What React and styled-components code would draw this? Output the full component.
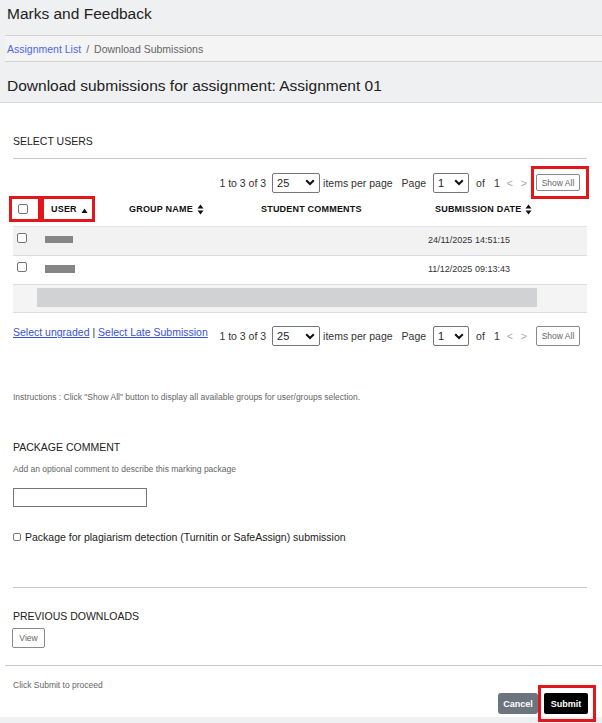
import React from "react";
import styled, { createGlobalStyle } from "styled-components";

const Global = createGlobalStyle`
  html, body { margin: 0; padding: 0; background: #eff0f1; }
  body { font-family: "Liberation Sans", Arial, sans-serif; color: #222; }
  * { box-sizing: border-box; }
`;

const Page = styled.div`
  width: 602px;
  height: 723px;
  overflow: hidden;
  background: #eff0f1;
`;

const TopBar = styled.header`
  height: 35px;
  padding: 5px 0 0 7px;
  line-height: 18px;
  font-size: 15.5px;
  color: #222;
`;

const Crumbs = styled.nav`
  margin-left: 5px;
  height: 27px;
  background: #f4f4f4;
  border-top: 1px solid #d2d2d2;
  border-bottom: 1px solid #d2d2d2;
  display: flex;
  align-items: center;
  padding-left: 2px;
  font-size: 10.5px;
  color: #666;
  gap: 5px;
`;

const CrumbLink = styled.a`
  color: #4a66f0;
  text-decoration: none;
`;

const TitleBar = styled.h1`
  margin: 0;
  height: 41px;
  padding: 15px 0 0 7px;
  line-height: 18px;
  font-size: 15.5px;
  font-weight: normal;
  color: #222;
  border-bottom: 1px solid #d8d8d8;
`;

const Panel = styled.main`
  background: #fff;
  height: 614px;
  display: flex;
  flex-direction: column;
`;

const Body = styled.section`
  padding: 0 15px 0 13px;
  display: flex;
  flex-direction: column;
`;

const Label = styled.div`
  margin-top: ${(p) => p.$mt}px;
  font-size: 10.5px;
  line-height: 12px;
  color: #222;
`;

const Hint = styled.div`
  margin-top: ${(p) => p.$mt}px;
  font-size: 8.5px;
  line-height: 10px;
  color: #666;
`;

const Divider = styled.hr`
  margin: ${(p) => p.$mt}px 0 0;
  border: 0;
  border-top: 1px solid #c8c8c8;
  height: 0;
`;

const PagerRow = styled.div`
  margin-top: ${(p) => p.$mt}px;
  display: flex;
  align-items: ${(p) => p.$align || "center"};
  justify-content: ${(p) => p.$justify || "flex-end"};
  margin-right: ${(p) => p.$mr}px;
`;

const Pager = styled.div`
  display: flex;
  align-items: center;
  font-size: 10.5px;
  color: #333;
  margin-left: 2px;
`;

const FakeSelect = styled.div`
  width: ${(p) => p.$w}px;
  height: 20px;
  border: 1px solid #767676;
  border-radius: 2px;
  background: #fff;
  display: flex;
  align-items: center;
  justify-content: space-between;
  padding: 0 4px 0 4px;
  font-size: 11px;
  color: #222;
  margin: 0 ${(p) => p.$mr}px 0 ${(p) => p.$ml}px;
`;

const Arrow = styled.span`
  color: #aaa;
  margin-left: ${(p) => p.$ml}px;
`;

const SmallButton = styled.button`
  font-family: inherit;
  font-size: 8.5px;
  color: #666;
  background: #fff;
  border: 1px solid #8a8a8a;
  border-radius: 2px;
  padding: 0;
  width: ${(p) => p.$w}px;
  height: ${(p) => p.$h}px;
  display: flex;
  align-items: center;
  justify-content: center;
  margin-left: ${(p) => p.$ml || 0}px;
`;

const RedBox = styled.div`
  border: 3px solid #e3161b;
  padding: ${(p) => p.$pad};
  display: flex;
  align-items: center;
  margin-left: ${(p) => p.$ml || 0}px;
`;

const HeaderGrid = styled.div`
  margin-top: -3px;
  margin-left: -4px;
  display: grid;
  grid-template-columns: 32px 88px 132px 167px 1fr;
  align-items: center;
  height: 30px;
  padding-bottom: 4px;
  font-size: 9px;
  font-weight: bold;
  letter-spacing: 0.2px;
  color: #111;
`;

const HeadCell = styled.div`
  display: flex;
  align-items: center;
  gap: 4px;
  padding-left: ${(p) => p.$pl || 0}px;
`;

const Table = styled.div`
  border-top: 1px solid #e2e2e8;
`;

const Row = styled.div`
  display: grid;
  grid-template-columns: 28px 88px 132px 167px 1fr;
  align-items: center;
  height: 29px;
  padding-bottom: 3px;
  border-bottom: 1px solid #dcdce2;
  background: ${(p) => (p.$shade ? "#f2f2f2" : "#fff")};
  font-size: 9px;
  color: #333;
`;

const FillRow = styled.div`
  height: 28px;
  border-bottom: 1px solid #dcdce2;
  background: #f4f4f4;
  padding: 3px 50px 5px 24px;
  display: flex;
`;

const FillBar = styled.div`
  flex: 1;
  background: #d1d2d3;
`;

const Check = styled.span`
  display: block;
  width: ${(p) => p.$s || 10}px;
  height: ${(p) => p.$s || 10}px;
  border: 1px solid #767676;
  border-radius: 2px;
  background: #fff;
  margin-left: ${(p) => p.$ml || 0}px;
  margin-top: ${(p) => p.$mt || 0}px;
`;

const NameBar = styled.span`
  display: block;
  width: ${(p) => p.$w}px;
  height: ${(p) => p.$h}px;
  background: #868686;
  margin-left: 4px;
`;

const Links = styled.div`
  font-size: 10.5px;
  color: #333;
`;

const Link = styled.a`
  color: #3552d4;
  text-decoration: underline;
`;

const TextBox = styled.div`
  margin-top: 14px;
  width: 134px;
  height: 19px;
  border: 1px solid #767676;
  background: #fff;
`;

const CheckLine = styled.label`
  margin-top: 24px;
  display: flex;
  align-items: center;
  gap: 4px;
  font-size: 10.5px;
  color: #222;
`;

const Footer = styled.footer`
  margin-top: 17px;
  margin-left: 5px;
  border-top: 1px solid #c8c8c8;
  display: flex;
  justify-content: space-between;
  align-items: flex-start;
  padding: 0 6px 0 8px;
`;

const FooterNote = styled.div`
  margin-top: 14px;
  font-size: 8.5px;
  color: #666;
`;

const Actions = styled.div`
  margin-top: 19px;
  margin-bottom: -5px;
  display: flex;
  align-items: center;
`;

const ActionButton = styled.button`
  font-family: inherit;
  font-size: 9px;
  font-weight: bold;
  color: #fff;
  background: ${(p) => (p.$dark ? "#000" : "#6c757d")};
  border: 0;
  border-radius: ${(p) => (p.$dark ? 2 : 3)}px;
  width: ${(p) => p.$w}px;
  height: 21px;
  padding: 0;
`;

const SortBoth = () => (
  <svg width="7" height="11" viewBox="0 0 7 11">
    <path d="M3.5 0.5 L6.5 4.5 L0.5 4.5 Z" fill="#111" />
    <path d="M3.5 10.5 L6.5 6.5 L0.5 6.5 Z" fill="#111" />
  </svg>
);

const SortUp = () => (
  <svg width="7" height="6" viewBox="0 0 7 6" style={{ marginTop: 4 }}>
    <path d="M3.5 0.5 L6.5 5 L0.5 5 Z" fill="#111" />
  </svg>
);

const Chevron = () => (
  <svg width="10" height="7" viewBox="0 0 10 7">
    <path d="M1.2 1.2 L5 5 L8.8 1.2" fill="none" stroke="#111" strokeWidth="2" />
  </svg>
);

const PagerBody = () => (
  <Pager>
    1 to 3 of 3
    <FakeSelect $w={48} $ml={6} $mr={3}>
      25
      <Chevron />
    </FakeSelect>
    items per page
    <span style={{ marginLeft: 9 }}>Page</span>
    <FakeSelect $w={36} $ml={7} $mr={7}>
      1
      <Chevron />
    </FakeSelect>
    of
    <span style={{ marginLeft: 9 }}>1</span>
    <Arrow $ml={7}>&lt;</Arrow>
    <Arrow $ml={8}>&gt;</Arrow>
  </Pager>
);

export default function App() {
  return (
    <Page>
      <Global />
      <TopBar>Marks and Feedback</TopBar>
      <Crumbs>
        <CrumbLink href="#">Assignment List</CrumbLink>
        <span>/</span>
        <span>Download Submissions</span>
      </Crumbs>
      <TitleBar>Download submissions for assignment: Assignment 01</TitleBar>
      <Panel>
        <Body>
          <Label $mt={32}>SELECT USERS</Label>
          <Divider $mt={11} />
          <PagerRow $mt={7} $mr={-2}>
            <PagerBody />
            <RedBox $pad="5px 6px 5px 2px" $ml={4}>
              <SmallButton $w={44} $h={17}>Show All</SmallButton>
            </RedBox>
          </PagerRow>
          <HeaderGrid>
            <RedBox $pad="5px 6px">
              <Check />
            </RedBox>
            <div>
              <RedBox $pad="0 6px 0 7px" style={{ width: 54, height: 26 }}>
                <HeadCell>
                  USER <SortUp />
                </HeadCell>
              </RedBox>
            </div>
            <HeadCell>
              GROUP NAME <SortBoth />
            </HeadCell>
            <HeadCell>STUDENT COMMENTS</HeadCell>
            <HeadCell $pl={7}>
              SUBMISSION DATE <SortBoth />
            </HeadCell>
          </HeaderGrid>
          <Table>
            <Row $shade>
              <Check $ml={4} $mt={-3} />
              <NameBar $w={28} $h={7} />
              <span />
              <span />
              <span>24/11/2025 14:51:15</span>
            </Row>
            <Row>
              <Check $ml={4} $mt={-3} />
              <NameBar $w={30} $h={8} />
              <span />
              <span />
              <span>11/12/2025 09:13:43</span>
            </Row>
            <FillRow>
              <FillBar />
            </FillRow>
          </Table>
          <PagerRow $mt={13} $mr={7} $justify="space-between" $align="flex-start">
            <Links>
              <Link href="#">Select ungraded</Link> | <Link href="#">Select Late Submission</Link>
            </Links>
            <PagerRow $mt={0} $mr={0}>
              <PagerBody />
              <SmallButton $w={44} $h={20} $ml={9}>Show All</SmallButton>
            </PagerRow>
          </PagerRow>
          <Hint $mt={46}>
            Instructions : Click "Show All" button to display all available groups for user/groups selection.
          </Hint>
          <Label $mt={39}>PACKAGE COMMENT</Label>
          <Hint $mt={11}>Add an optional comment to describe this marking package</Hint>
          <TextBox />
          <CheckLine>
            <Check $s={8} />
            Package for plagiarism detection (Turnitin or SafeAssign) submission
          </CheckLine>
          <Divider $mt={44} />
          <Label $mt={22}>PREVIOUS DOWNLOADS</Label>
          <div style={{ marginTop: 6, marginLeft: -1 }}>
            <SmallButton $w={33} $h={20}>View</SmallButton>
          </div>
        </Body>
        <Footer>
          <FooterNote>Click Submit to proceed</FooterNote>
          <Actions>
            <ActionButton $w={40}>Cancel</ActionButton>
            <RedBox $pad="5px 5px 5px 3px">
              <ActionButton $dark $w={44}>Submit</ActionButton>
            </RedBox>
          </Actions>
        </Footer>
      </Panel>
    </Page>
  );
}
